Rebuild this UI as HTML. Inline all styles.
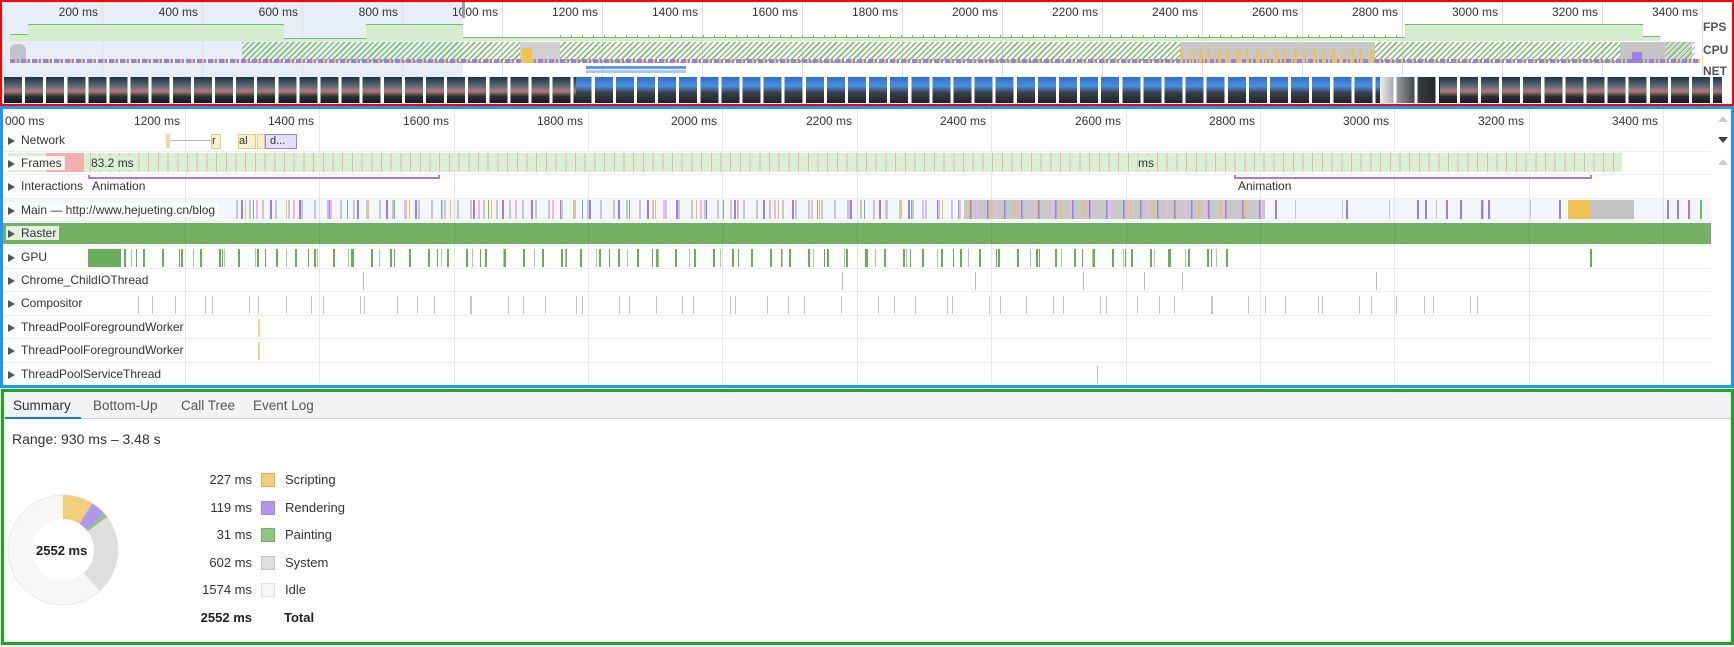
<!DOCTYPE html>
<html><head><meta charset="utf-8"><style>
*{margin:0;padding:0;box-sizing:border-box}
body{width:1734px;height:647px;background:#fff;font-family:"Liberation Sans",sans-serif;font-size:12px;color:#333;position:relative;overflow:hidden}
.a{position:absolute}
.t{position:absolute;font-size:12px;color:#333;white-space:nowrap}
.ol{position:absolute;top:5px;width:50px;text-align:right;font-size:12px;color:#333}
.og{position:absolute;top:0;width:1px;height:104px;background:#e0e0e0}
.fl{position:absolute;top:114px;width:55px;text-align:right;font-size:12px;color:#333}
.fg{position:absolute;top:109px;width:1px;height:276px;background:rgba(0,0,0,.09)}
.rl{position:absolute;left:6px;font-size:12px;color:#333;white-space:nowrap;padding:0 3px 0 2px}
.rs{position:absolute;left:3px;width:1708px;height:1px;background:#eee}
.tri{display:inline-block;width:0;height:0;border-left:7px solid #555;border-top:4.5px solid transparent;border-bottom:4.5px solid transparent;margin-right:6px;vertical-align:-1px}
.lv{position:absolute;left:180px;width:72px;text-align:right;font-size:13px;color:#333}
.ls{position:absolute;left:261px;width:14px;height:14px}
.ln{position:absolute;left:285px;font-size:13px;color:#333}
</style></head><body>

<!-- OVERVIEW -->
<div class="a" style="left:0;top:0;width:463px;height:106px;background:#e8eef8"></div>
<div class="og" style="left:102px"></div><div class="og" style="left:202px"></div><div class="og" style="left:302px"></div><div class="og" style="left:402px"></div><div class="og" style="left:502px"></div><div class="og" style="left:602px"></div><div class="og" style="left:702px"></div><div class="og" style="left:802px"></div><div class="og" style="left:902px"></div><div class="og" style="left:1002px"></div><div class="og" style="left:1102px"></div><div class="og" style="left:1202px"></div><div class="og" style="left:1302px"></div><div class="og" style="left:1402px"></div><div class="og" style="left:1502px"></div><div class="og" style="left:1602px"></div><div class="og" style="left:1702px"></div>
<div class="ol" style="left:48px">200 ms</div><div class="ol" style="left:148px">400 ms</div><div class="ol" style="left:248px">600 ms</div><div class="ol" style="left:348px">800 ms</div><div class="ol" style="left:448px">1000 ms</div><div class="ol" style="left:548px">1200 ms</div><div class="ol" style="left:648px">1400 ms</div><div class="ol" style="left:748px">1600 ms</div><div class="ol" style="left:848px">1800 ms</div><div class="ol" style="left:948px">2000 ms</div><div class="ol" style="left:1048px">2200 ms</div><div class="ol" style="left:1148px">2400 ms</div><div class="ol" style="left:1248px">2600 ms</div><div class="ol" style="left:1348px">2800 ms</div><div class="ol" style="left:1448px">3000 ms</div><div class="ol" style="left:1548px">3200 ms</div><div class="ol" style="left:1648px">3400 ms</div>
<div class="a" style="left:462px;top:2px;width:3px;height:16px;background:#999"></div>
<!-- FPS -->
<div class="a" style="left:10px;top:34px;width:18px;height:7px;background:#d5ecd0;border-top:1px solid #6bc15c"></div>
<div class="a" style="left:28px;top:24px;width:256px;height:17px;background:#d5ecd0;border-top:1px solid #6bc15c"></div>
<div class="a" style="left:284px;top:38px;width:82px;height:3px;background:#d5ecd0;border-top:1px solid #6bc15c"></div>
<div class="a" style="left:366px;top:24px;width:97px;height:17px;background:#d5ecd0;border-top:1px solid #6bc15c"></div>
<div class="a" style="left:463px;top:37px;width:942px;height:4px;background:#d5ecd0;border-top:1px solid #6bc15c"></div>
<div class="a" style="left:560px;top:35px;width:845px;height:2px;background:repeating-linear-gradient(90deg,#6bc15c 0 1px,transparent 1px 11px)"></div>
<div class="a" style="left:1405px;top:24px;width:238px;height:17px;background:#d5ecd0;border-top:1px solid #6bc15c"></div>
<div class="a" style="left:1643px;top:36px;width:17px;height:5px;background:#d5ecd0;border-top:1px solid #6bc15c"></div>
<!-- CPU -->
<div class="a" style="left:242px;top:42px;width:1450px;height:21px;background:repeating-linear-gradient(135deg,#7cbf6e 0 1.5px,transparent 1.5px 4px)"></div>
<div class="a" style="left:10px;top:44px;width:16px;height:19px;background:#bfc4ca;border-radius:6px 6px 0 0"></div>
<div class="a" style="left:520px;top:42px;width:40px;height:21px;background:#cfcfcf"></div>
<div class="a" style="left:1180px;top:42px;width:195px;height:21px;background:#c8c8c8"></div>
<div class="a" style="left:1620px;top:42px;width:45px;height:21px;background:#c4c4c4"></div>
<div class="a" style="left:1665px;top:42px;width:30px;height:21px;background:repeating-linear-gradient(135deg,#ccc 0 1.5px,transparent 1.5px 4px)"></div>
<div class="a" style="left:10px;top:59px;width:1690px;height:4px;background:repeating-linear-gradient(90deg,#9b7fe6 0 5px,#f0c24f 5px 7px,#9b7fe6 7px 9px,transparent 9px 11px)"></div>
<div class="a" style="left:1180px;top:50px;width:195px;height:13px;background:repeating-linear-gradient(90deg,#f0c24f 0 3px,transparent 3px 9px,#f0c24f 9px 11px,transparent 11px 19px)"></div>
<div class="a" style="left:522px;top:48px;width:10px;height:15px;background:#f0c24f"></div>
<div class="a" style="left:1632px;top:52px;width:10px;height:11px;background:#9b7fe6"></div>
<!-- NET -->
<div class="a" style="left:586px;top:66px;width:100px;height:3px;background:#5b9bea"></div>
<div class="a" style="left:586px;top:70px;width:100px;height:3px;background:#a9c8f2"></div>
<div class="t" style="left:1703px;top:20px;font-weight:bold;color:#555">FPS</div>
<div class="t" style="left:1703px;top:43px;font-weight:bold;color:#555">CPU</div>
<div class="t" style="left:1703px;top:64px;font-weight:bold;color:#555">NET</div>
<!-- filmstrip -->
<div class="a" style="left:4px;top:77px;width:572px;height:26px;background:linear-gradient(#1e3440,#506470 30%,#b07a78 55%,#2a3036 75%,#151a1e)"></div>
<div class="a" style="left:576px;top:77px;width:804px;height:26px;background:linear-gradient(#2f6fc9,#4d8fe0 35%,#38424a 60%,#202326)"></div>
<div class="a" style="left:1380px;top:77px;width:60px;height:26px;background:linear-gradient(90deg,#eee,#3a4046 60%,#202326)"></div>
<div class="a" style="left:1440px;top:77px;width:282px;height:26px;background:linear-gradient(#1e3440,#506470 30%,#b07a78 55%,#2a3036 75%,#151a1e)"></div>
<div class="a" style="left:4px;top:77px;width:1720px;height:26px;background:repeating-linear-gradient(90deg,transparent 0 18px,#fff 18px 21.1px)"></div>
<div class="a" style="left:0;top:0;width:1734px;height:106px;border:2px solid #f00"></div>

<!-- FLAME CHART -->
<div class="a" style="left:3px;top:198px;width:1708px;height:23px;background:#f3f7fd"></div>
<div class="a" style="left:3px;top:223px;width:1708px;height:21px;background:#73b064"></div>
<div class="fg" style="left:185px"></div><div class="fg" style="left:319px"></div><div class="fg" style="left:454px"></div><div class="fg" style="left:588px"></div><div class="fg" style="left:722px"></div><div class="fg" style="left:857px"></div><div class="fg" style="left:991px"></div><div class="fg" style="left:1126px"></div><div class="fg" style="left:1260px"></div><div class="fg" style="left:1394px"></div><div class="fg" style="left:1529px"></div><div class="fg" style="left:1663px"></div>
<div class="t" style="left:5px;top:114px">000 ms</div>
<div class="fl" style="left:125px">1200 ms</div><div class="fl" style="left:259px">1400 ms</div><div class="fl" style="left:394px">1600 ms</div><div class="fl" style="left:528px">1800 ms</div><div class="fl" style="left:662px">2000 ms</div><div class="fl" style="left:797px">2200 ms</div><div class="fl" style="left:931px">2400 ms</div><div class="fl" style="left:1066px">2600 ms</div><div class="fl" style="left:1200px">2800 ms</div><div class="fl" style="left:1334px">3000 ms</div><div class="fl" style="left:1469px">3200 ms</div><div class="fl" style="left:1603px">3400 ms</div>
<!-- network -->
<div class="a" style="left:168px;top:140px;width:45px;height:1px;background:#bbb"></div>
<div class="a" style="left:166px;top:134px;width:4px;height:14px;background:#eadbb8"></div>
<div class="a" style="left:211px;top:134px;width:10px;height:15px;background:#fbefd2;border:1px solid #e8c980;font-size:11px;line-height:13px">r</div>
<div class="a" style="left:238px;top:134px;width:18px;height:15px;background:#fbefd2;border:1px solid #e8c980;font-size:11px;line-height:13px">al</div>
<div class="a" style="left:257px;top:134px;width:8px;height:15px;background:#fbefd2;border:1px solid #e8c980"></div>
<div class="a" style="left:265px;top:134px;width:32px;height:15px;background:#e6e0fa;border:1px solid #9a7fe6;font-size:11px;line-height:13px;padding-left:4px">d...</div>
<!-- frames -->
<div class="a" style="left:8px;top:153px;width:1614px;height:19px;background:#d9f0d3"></div>
<div class="a" style="left:90px;top:153px;width:1532px;height:19px;background:repeating-linear-gradient(90deg,#f0b0b0 0 1px,transparent 1px 9.7px)"></div>
<div class="a" style="left:46px;top:153px;width:38px;height:19px;background:#f0b0b0"></div>
<div class="t" style="left:91px;top:156px;background:#d9f0d3">83.2 ms</div>
<div class="t" style="left:1138px;top:156px;background:#d9f0d3">ms</div>
<!-- interactions -->
<div class="a" style="left:88px;top:175px;width:352px;height:4px;border:2px solid #9a7fe6;border-top:none"></div>
<div class="a" style="left:1234px;top:175px;width:358px;height:4px;border:2px solid #9a7fe6;border-top:none"></div>
<div class="t" style="left:92px;top:179px">Animation</div>
<div class="t" style="left:1238px;top:179px">Animation</div>
<!-- main -->
<div class="a" style="left:236px;top:200px;width:730px;height:19px;background:repeating-linear-gradient(90deg,#c8c8c8 0 2px,transparent 2px 13px),repeating-linear-gradient(90deg,transparent 0 5px,#9b7fe6 5px 7px,transparent 7px 29px),repeating-linear-gradient(90deg,transparent 0 9px,#f0c24f 9px 10px,transparent 10px 41px),repeating-linear-gradient(90deg,transparent 0 17px,#76b768 17px 18px,transparent 18px 47px),repeating-linear-gradient(90deg,transparent 0 20px,#e8b8f0 20px 22px,transparent 22px 37px)"></div>
<div class="a" style="left:965px;top:200px;width:300px;height:19px;background:repeating-linear-gradient(90deg,transparent 0 5px,#9b7fe6 5px 6.5px,transparent 6.5px 17px),repeating-linear-gradient(90deg,transparent 0 3px,#f0c24f 3px 4.5px,transparent 4.5px 23px),repeating-linear-gradient(90deg,transparent 0 11px,#e8b8f0 11px 13px,transparent 13px 19px),#c8c8c8"></div>
<div class="a" style="left:1265px;top:200px;width:330px;height:19px;background:repeating-linear-gradient(90deg,transparent 0 30px,#c8c8c8 30px 31px,transparent 31px 47px),repeating-linear-gradient(90deg,transparent 0 10px,#9b7fe6 10px 12px,transparent 12px 71px)"></div>
<div class="a" style="left:1425px;top:200px;width:2px;height:19px;background:#9b7fe6"></div><div class="a" style="left:1446px;top:200px;width:2px;height:19px;background:#9b7fe6"></div><div class="a" style="left:1460px;top:200px;width:2px;height:19px;background:#9b7fe6"></div><div class="a" style="left:1481px;top:200px;width:2px;height:19px;background:#9b7fe6"></div>
<div class="a" style="left:1568px;top:200px;width:22px;height:19px;background:#f0c24f"></div>
<div class="a" style="left:1590px;top:200px;width:44px;height:19px;background:#c4c4c4"></div>
<div class="a" style="left:1667px;top:200px;width:2px;height:19px;background:#9b7fe6"></div><div class="a" style="left:1677px;top:200px;width:2px;height:19px;background:#9b7fe6"></div><div class="a" style="left:1688px;top:200px;width:2px;height:19px;background:#9b7fe6"></div><div class="a" style="left:1700px;top:200px;width:2px;height:19px;background:#76b768"></div>
<!-- GPU -->
<div class="a" style="left:88px;top:249px;width:33px;height:18px;background:#6aad5a"></div>
<div class="a" style="left:124px;top:249px;width:1116px;height:18px;background:repeating-linear-gradient(90deg,#6aad5a 0 2px,transparent 2px 19px),repeating-linear-gradient(90deg,transparent 0 7px,#a8d49c 7px 8px,transparent 8px 31px),repeating-linear-gradient(90deg,transparent 0 12px,#6aad5a 12px 13px,transparent 13px 43px)"></div>
<div class="a" style="left:1590px;top:249px;width:2px;height:18px;background:#6aad5a"></div>
<!-- chrome io -->
<div class="a" style="left:363px;top:272px;width:1px;height:18px;background:#bbb"></div><div class="a" style="left:842px;top:272px;width:1px;height:18px;background:#bbb"></div><div class="a" style="left:975px;top:272px;width:1px;height:18px;background:#bbb"></div><div class="a" style="left:1083px;top:272px;width:1px;height:18px;background:#bbb"></div><div class="a" style="left:1144px;top:272px;width:1px;height:18px;background:#bbb"></div><div class="a" style="left:1182px;top:272px;width:1px;height:18px;background:#bbb"></div><div class="a" style="left:1376px;top:272px;width:1px;height:18px;background:#bbb"></div>
<!-- compositor -->
<div class="a" style="left:138px;top:296px;width:1360px;height:18px;background:repeating-linear-gradient(90deg,#c4c4c4 0 1px,transparent 1px 37px),repeating-linear-gradient(90deg,transparent 0 14px,#c4c4c4 14px 15px,transparent 15px 53px)"></div>
<div class="a" style="left:258px;top:319px;width:2px;height:18px;background:#f5d48a"></div>
<div class="a" style="left:258px;top:342px;width:2px;height:18px;background:#f5d48a"></div>
<div class="a" style="left:1097px;top:366px;width:1px;height:18px;background:#bbb"></div>
<!-- row separators -->
<div class="rs" style="top:151px"></div><div class="rs" style="top:174px"></div><div class="rs" style="top:198px"></div><div class="rs" style="top:221px"></div><div class="rs" style="top:245px"></div><div class="rs" style="top:268px"></div><div class="rs" style="top:291px"></div><div class="rs" style="top:315px"></div><div class="rs" style="top:338px"></div><div class="rs" style="top:362px"></div>
<!-- row labels -->
<div class="rl" style="top:133px"><span class="tri"></span>Network</div>
<div class="rl" style="top:156px;background:rgba(255,255,255,.85)"><span class="tri"></span>Frames</div>
<div class="rl" style="top:179px"><span class="tri"></span>Interactions</div>
<div class="rl" style="top:203px;background:rgba(255,255,255,.9)"><span class="tri"></span>Main — http://www.hejueting.cn/blog</div>
<div class="rl" style="top:226px;background:#e4f0e0"><span class="tri"></span>Raster</div>
<div class="rl" style="top:250px"><span class="tri"></span>GPU</div>
<div class="rl" style="top:273px"><span class="tri"></span>Chrome_ChildIOThread</div>
<div class="rl" style="top:296px"><span class="tri"></span>Compositor</div>
<div class="rl" style="top:320px"><span class="tri"></span>ThreadPoolForegroundWorker</div>
<div class="rl" style="top:343px"><span class="tri"></span>ThreadPoolForegroundWorker</div>
<div class="rl" style="top:367px"><span class="tri"></span>ThreadPoolServiceThread</div>
<!-- scrollbar -->
<div class="a" style="left:1713px;top:109px;width:18px;height:276px;background:#fff"></div>
<div class="a" style="left:1718px;top:116px;width:0;height:0;border-left:5px solid transparent;border-right:5px solid transparent;border-bottom:6px solid #ccc"></div>
<div class="a" style="left:1718px;top:137px;width:0;height:0;border-left:5px solid transparent;border-right:5px solid transparent;border-top:6px solid #444"></div>
<div class="a" style="left:1718px;top:159px;width:0;height:0;border-left:5px solid transparent;border-right:5px solid transparent;border-bottom:6px solid #ccc"></div>
<div class="a" style="left:0;top:106px;width:1734px;height:282px;border:3px solid #2196f3"></div>

<!-- SUMMARY -->
<div class="a" style="left:4px;top:392px;width:1727px;height:27px;background:#f1f3f4;border-bottom:1px solid #ccc"></div>
<div class="t" style="left:13px;top:398px;font-size:13.5px;color:#333">Summary</div>
<div class="t" style="left:93px;top:398px;font-size:13.5px;color:#555">Bottom-Up</div>
<div class="t" style="left:181px;top:398px;font-size:13.5px;color:#555">Call Tree</div>
<div class="t" style="left:253px;top:398px;font-size:13.5px;color:#555">Event Log</div>
<div class="a" style="left:5px;top:417px;width:76px;height:2px;background:#1a73e8"></div>
<div class="t" style="left:12px;top:431px;font-size:14px;color:#333">Range: 930 ms – 3.48 s</div>
<svg class="a" style="left:0;top:480px" width="150" height="150" viewBox="0 0 150 150">
<g transform="translate(63,70)">
<circle r="43" fill="none" stroke="#f7f7f7" stroke-width="24"/>
<circle r="55" fill="none" stroke="#e6e6e6" stroke-width="0.8"/>
<path d="M0 -43 A43 43 0 0 1 22.80 -36.46" fill="none" stroke="#f2cd7a" stroke-width="24"/>
<path d="M22.80 -36.46 A43 43 0 0 1 32.36 -28.32" fill="none" stroke="#af99e8" stroke-width="24"/>
<path d="M32.36 -28.32 A43 43 0 0 1 34.43 -25.77" fill="none" stroke="#8fc582" stroke-width="24"/>
<path d="M34.43 -25.77 A43 43 0 0 1 28.72 32.01" fill="none" stroke="#dedede" stroke-width="24"/>
</g></svg>
<div class="t" style="left:36px;top:543px;font-size:13px;font-weight:bold;color:#222">2552 ms</div>
<div class="lv" style="top:472px">227 ms</div><div class="ls" style="top:473px;background:#f2cd7a;border:1px solid #d9b45f"></div><div class="ln" style="top:472px">Scripting</div>
<div class="lv" style="top:500px">119 ms</div><div class="ls" style="top:501px;background:#af99e8;border:1px solid #9a83d6"></div><div class="ln" style="top:500px">Rendering</div>
<div class="lv" style="top:527px">31 ms</div><div class="ls" style="top:528px;background:#8fc582;border:1px solid #76ad69"></div><div class="ln" style="top:527px">Painting</div>
<div class="lv" style="top:555px">602 ms</div><div class="ls" style="top:556px;background:#dedede;border:1px solid #c8c8c8"></div><div class="ln" style="top:555px">System</div>
<div class="lv" style="top:582px">1574 ms</div><div class="ls" style="top:583px;background:#f7f7f7;border:1px solid #e0e0e0"></div><div class="ln" style="top:582px">Idle</div>
<div class="lv" style="top:610px;font-weight:bold;color:#222">2552 ms</div><div class="ln" style="top:610px;left:284px;font-weight:bold;color:#222">Total</div>
<div class="a" style="left:1px;top:389px;width:1733px;height:256px;border:3px solid #1aab1a"></div>
</body></html>
